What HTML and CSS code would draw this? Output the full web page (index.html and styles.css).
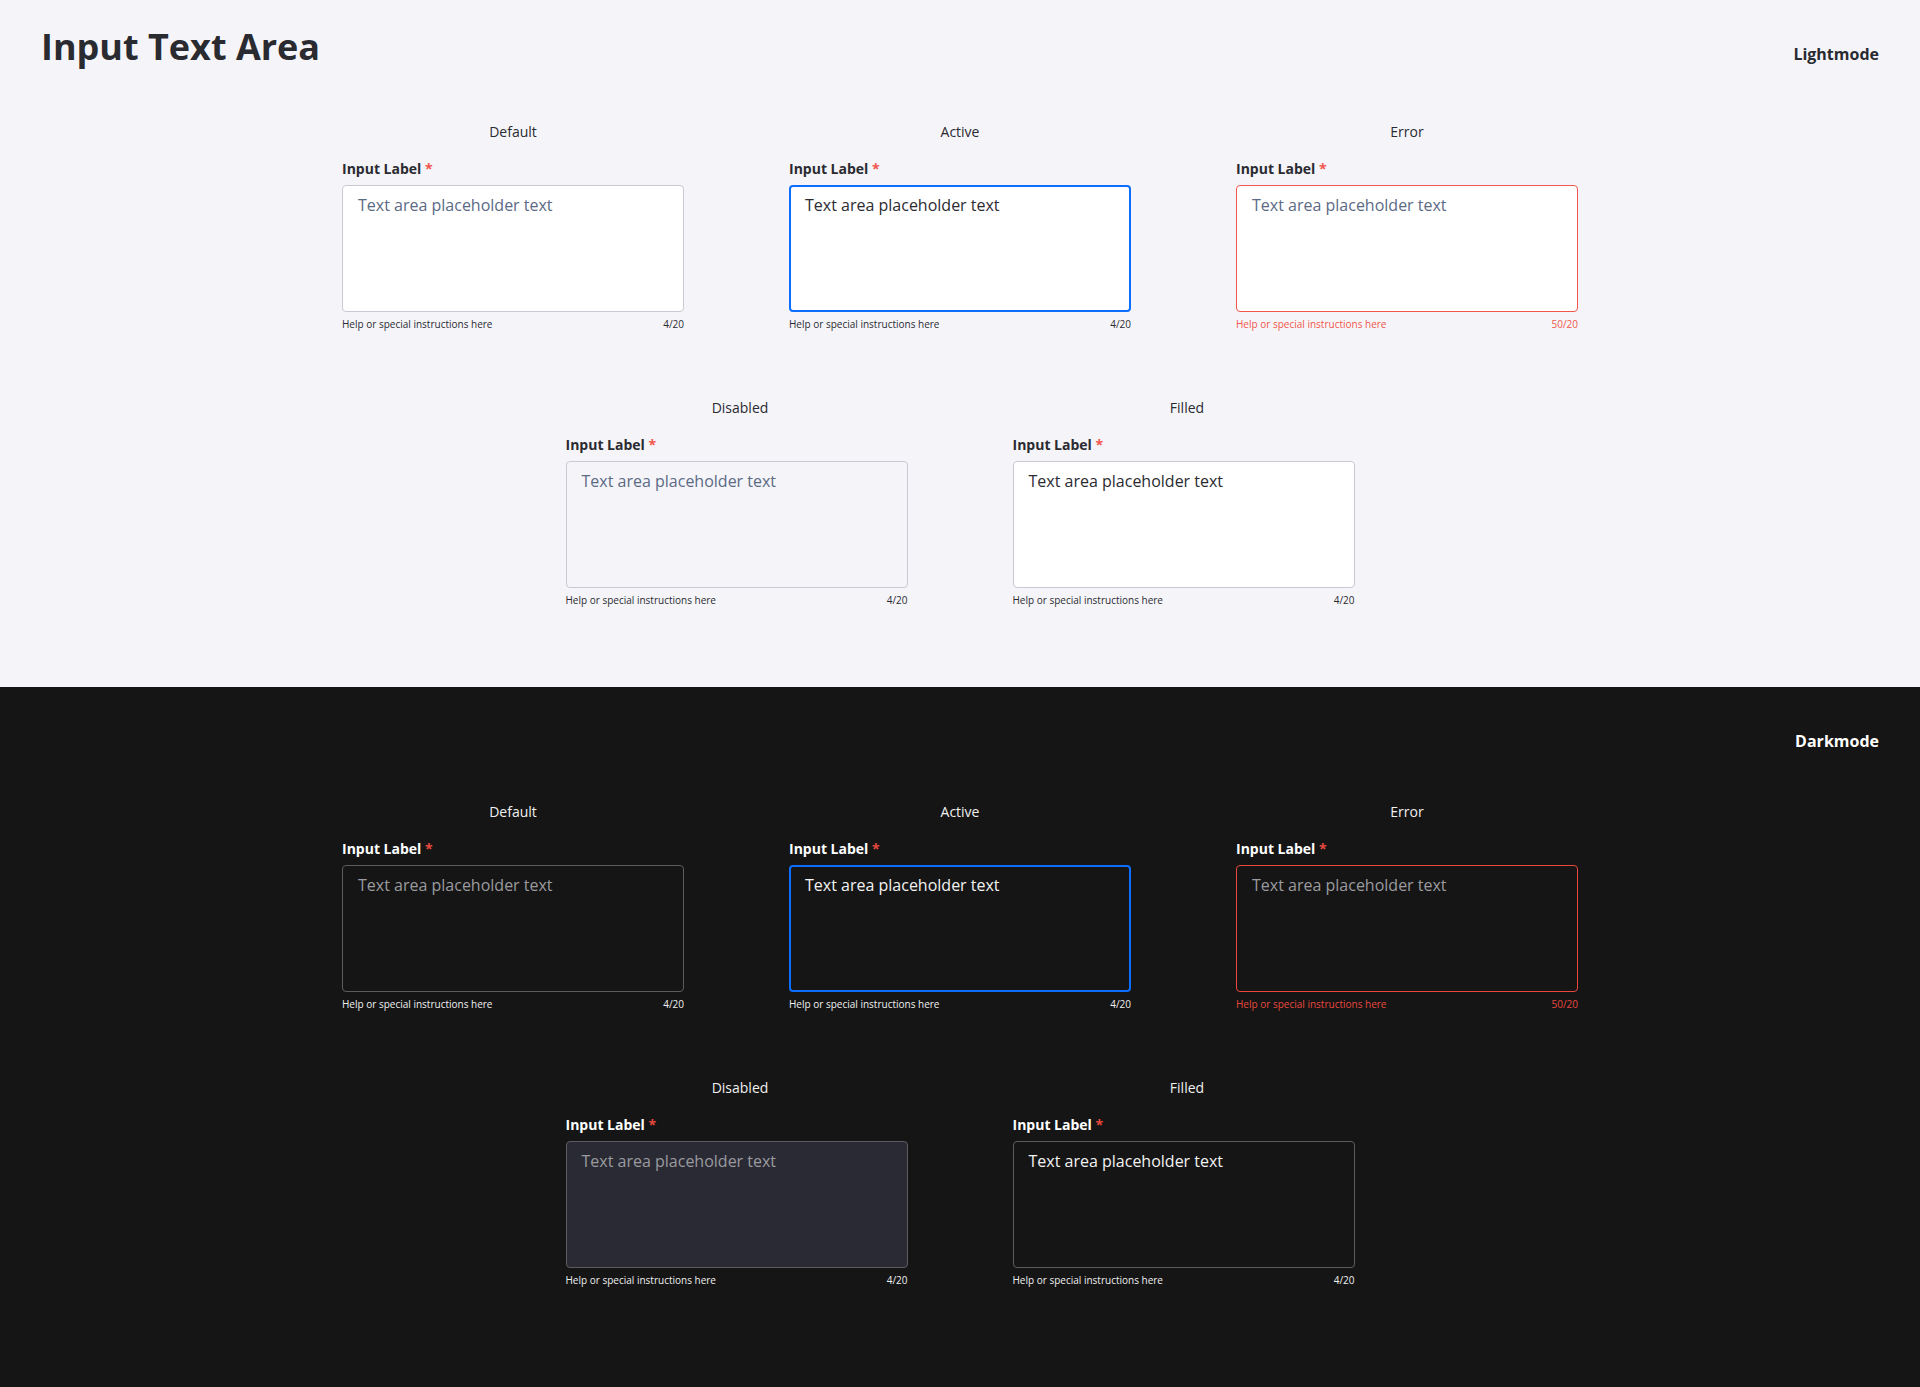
FILE: index.html
```html
<!DOCTYPE html>
<html lang="en">
<head>
<meta charset="utf-8">
<title>Input Text Area</title>
<link rel="stylesheet" href="styles.css">
</head>
<body>
<section class="mode mode-light">
  <header class="mode-header">
    <h1 class="page-title">Input Text Area</h1>
    <span class="mode-name">Lightmode</span>
  </header>
  <div class="rows">
    <div class="row">
      <div class="field">
        <div class="state">Default</div>
        <div class="label">Input Label <span class="req">*</span></div>
        <div class="box"><span class="ph">Text area placeholder text</span></div>
        <div class="help"><span>Help or special instructions here</span><span>4/20</span></div>
      </div>
      <div class="field field-active">
        <div class="state">Active</div>
        <div class="label">Input Label <span class="req">*</span></div>
        <div class="box"><span class="val">Text area placeholder text</span></div>
        <div class="help"><span>Help or special instructions here</span><span>4/20</span></div>
      </div>
      <div class="field field-error">
        <div class="state">Error</div>
        <div class="label">Input Label <span class="req">*</span></div>
        <div class="box"><span class="ph">Text area placeholder text</span></div>
        <div class="help"><span>Help or special instructions here</span><span>50/20</span></div>
      </div>
    </div>
    <div class="row row-second">
      <div class="field field-disabled">
        <div class="state">Disabled</div>
        <div class="label">Input Label <span class="req">*</span></div>
        <div class="box"><span class="ph">Text area placeholder text</span></div>
        <div class="help"><span>Help or special instructions here</span><span>4/20</span></div>
      </div>
      <div class="field field-filled">
        <div class="state">Filled</div>
        <div class="label">Input Label <span class="req">*</span></div>
        <div class="box"><span class="val">Text area placeholder text</span></div>
        <div class="help"><span>Help or special instructions here</span><span>4/20</span></div>
      </div>
    </div>
  </div>
</section>
<section class="mode mode-dark">
  <header class="mode-header">
    <span class="mode-name">Darkmode</span>
  </header>
  <div class="rows">
    <div class="row">
      <div class="field">
        <div class="state">Default</div>
        <div class="label">Input Label <span class="req">*</span></div>
        <div class="box"><span class="ph">Text area placeholder text</span></div>
        <div class="help"><span>Help or special instructions here</span><span>4/20</span></div>
      </div>
      <div class="field field-active">
        <div class="state">Active</div>
        <div class="label">Input Label <span class="req">*</span></div>
        <div class="box"><span class="val">Text area placeholder text</span></div>
        <div class="help"><span>Help or special instructions here</span><span>4/20</span></div>
      </div>
      <div class="field field-error">
        <div class="state">Error</div>
        <div class="label">Input Label <span class="req">*</span></div>
        <div class="box"><span class="ph">Text area placeholder text</span></div>
        <div class="help"><span>Help or special instructions here</span><span>50/20</span></div>
      </div>
    </div>
    <div class="row row-second">
      <div class="field field-disabled">
        <div class="state">Disabled</div>
        <div class="label">Input Label <span class="req">*</span></div>
        <div class="box"><span class="ph">Text area placeholder text</span></div>
        <div class="help"><span>Help or special instructions here</span><span>4/20</span></div>
      </div>
      <div class="field field-filled">
        <div class="state">Filled</div>
        <div class="label">Input Label <span class="req">*</span></div>
        <div class="box"><span class="val">Text area placeholder text</span></div>
        <div class="help"><span>Help or special instructions here</span><span>4/20</span></div>
      </div>
    </div>
  </div>
</section>
</body>
</html>
```

FILE: styles.css
```css
* { box-sizing: border-box; }

html, body {
  margin: 0;
  padding: 0;
}

body {
  font-family: "Open Sans", "Noto Sans", "Liberation Sans", sans-serif;
  width: 1920px;
  min-height: 1387px;
  background: #151515;
}

.mode {
  width: 100%;
}

.mode-light {
  background: #f5f5f9;
  padding: 23px 0 80px;
  color: #2a2a31;
  height: 687px;
}

.mode-dark {
  background: #151515;
  padding: 43px 0 100px;
  color: #ffffff;
  height: 700px;
}

.mode-header {
  display: flex;
  align-items: baseline;
  justify-content: space-between;
  padding: 0 41px 0 41px;
}

.mode-dark .mode-header {
  justify-content: flex-end;
}

.page-title {
  margin: 0;
  font-size: 36px;
  line-height: 48px;
  font-weight: 700;
  color: #2a2a31;
}

.mode-name {
  font-size: 16px;
  line-height: 22px;
  font-weight: 700;
}

.mode-light .mode-name { color: #2a2a31; }
.mode-dark .mode-name { color: #ffffff; }

.rows {
  display: flex;
  flex-direction: column;
  gap: 67px;
  margin-top: 51px;
}

.mode-dark .rows {
  margin-top: 50px;
}

.row {
  display: flex;
  justify-content: center;
  gap: 105px;
}

.field {
  width: 342px;
  display: flex;
  flex-direction: column;
}

.state {
  text-align: center;
  font-size: 14px;
  line-height: 20px;
  margin-bottom: 17px;
}

.row-second .state {
  padding-left: 7px;
}

.label {
  font-size: 14px;
  line-height: 20px;
  font-weight: 700;
  margin-bottom: 6px;
}

.req {
  color: #f2564b;
}

.box {
  height: 127px;
  border: 1px solid #c9c9d1;
  border-radius: 4px;
  background: #ffffff;
  padding: 8px 15px;
  font-size: 16px;
  line-height: 22px;
}

.ph { color: #5b6a85; }
.val { color: #2b2b31; }

.field-active .box {
  border: 2px solid #0d6efd;
  padding: 7px 14px;
}

.field-error .box {
  border-color: #f2564b;
}

.field-disabled .box {
  background: #f5f5f9;
}

.help {
  display: flex;
  justify-content: space-between;
  margin-top: 5px;
  font-size: 10px;
  line-height: 14px;
  color: #2a2a31;
}

.field-error .help {
  color: #f2564b;
}

/* Dark mode */
.mode-dark .state { color: #f0f0f0; }
.mode-dark .label { color: #ffffff; }
.mode-dark .req { color: #e8483e; }

.mode-dark .box {
  background: #151515;
  border-color: #5c5c60;
}

.mode-dark .ph { color: #9b9b9f; }
.mode-dark .val { color: #f2f2f2; }

.mode-dark .field-active .box {
  border-color: #0d6efd;
}

.mode-dark .field-error .box {
  border-color: #e8483e;
}

.mode-dark .field-disabled .box {
  background: #2a2a34;
}

.mode-dark .help { color: #f0f0f0; }
.mode-dark .field-error .help { color: #e8483e; }
```
